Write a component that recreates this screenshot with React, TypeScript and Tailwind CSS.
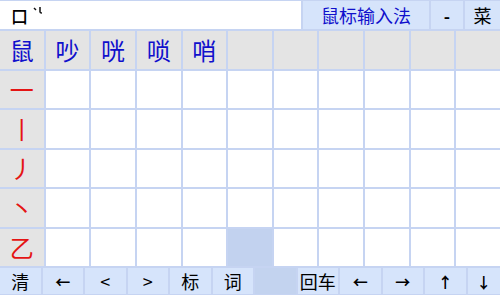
import React from 'react';

const cjk = "font-['Noto_Sans_CJK_SC','Noto_Sans',sans-serif]";

const header = ['鼠', '吵', '咣', '唢', '哨', '', '', '', '', '', ''];
const strokes = ['一', '丨', '丿', '丶', '乙'];
const tools = ['清', '←', '<', '>', '标', '词', '', '回车', '←', '→', '↑', '↓'];
const arrows = ['←', '→', '↑', '↓'];

const App: React.FC = () => {
  return (
    <div className={`w-[500px] h-[295px] bg-[#c6d4f2] flex flex-col gap-[2px] pt-[1px] pb-[1px] ${cjk}`}>
      {/* top bar */}
      <div className="h-[28px] flex gap-[2px] shrink-0">
        <div className="w-[301px] bg-white flex items-center pl-[11px] gap-[5px]">
          <span className="text-[17px] leading-none text-black font-medium">口</span>
          <svg width="11" height="9" viewBox="0 0 11 9" className="-mt-[9px]">
            <path d="M1 2 L3 4" stroke="#111" strokeWidth="1.5" fill="none" />
            <path d="M7 1 L7 6 Q7 7 9 7" stroke="#111" strokeWidth="1.5" fill="none" />
          </svg>
        </div>
        <div className="w-[126px] bg-[#d6e4fb] flex items-center justify-center text-[18px] text-[#1010cc] leading-none">
          鼠标输入法
        </div>
        <div className="w-[32px] bg-[#d6e4fb] flex items-center justify-center text-[17px] font-bold text-black leading-none">
          -
        </div>
        <div className="flex-1 bg-[#d6e4fb] flex items-center justify-center text-[18px] text-black leading-none">
          菜
        </div>
      </div>

      {/* candidate grid */}
      <div className="flex-1 grid grid-cols-11 grid-rows-6 gap-[2px]">
        {header.map((ch, i) => (
          <div key={'h' + i} className="bg-[#e4e4e4] flex items-center justify-center text-[24px] text-[#1010cc] leading-none">
            {ch}
          </div>
        ))}
        {strokes.map((s, r) => (
          <React.Fragment key={'r' + r}>
            <div className="bg-[#e4e4e4] flex items-center justify-center text-[24px] text-[#e41414] leading-none">
              {s}
            </div>
            {Array.from({ length: 10 }).map((_, c) => (
              <div
                key={c}
                className={r === 4 && c === 4 ? 'bg-[#c2d2ef]' : 'bg-white'}
              />
            ))}
          </React.Fragment>
        ))}
      </div>

      {/* bottom toolbar */}
      <div className="h-[26px] shrink-0 grid grid-cols-[repeat(11,40.5px)_1fr] gap-[2px]">
        {tools.map((t, i) => (
          <div
            key={i}
            className={`${t === '' ? 'bg-[#c3d3ef]' : 'bg-[#d6e4fb]'} flex items-center justify-center text-black leading-none ${
              arrows.includes(t) ? 'text-[15px] font-bold' : 'text-[18px]'
            }`}
          >
            {t}
          </div>
        ))}
      </div>
    </div>
  );
};

export default App;
